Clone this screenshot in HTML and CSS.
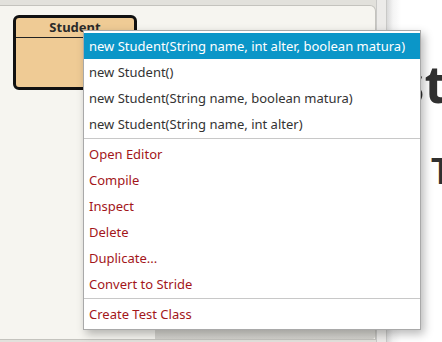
FILE: index.html
```html
<!DOCTYPE html>
<html>
<head>
<meta charset="utf-8">
<link rel="stylesheet" href="styles.css">
</head>
<body>
<div class="app">
  <div class="canvas-pane">
    <div class="canvas">
      <div class="other-class"></div>
      <div class="class-box">
        <div class="class-title">Student</div>
        <div class="class-body"></div>
      </div>
      <div class="hscroll"></div>
    </div>
  </div>
  <div class="divider"></div>
  <div class="doc">
    <div class="doc-h1">Test</div>
    <div class="doc-h2">T</div>
  </div>
</div>
<div class="menu">
  <div class="item active">new Student(String name, int alter, boolean matura)</div>
  <div class="item">new Student()</div>
  <div class="item">new Student(String name, boolean matura)</div>
  <div class="item">new Student(String name, int alter)</div>
  <div class="sep"></div>
  <div class="item red">Open Editor</div>
  <div class="item red">Compile</div>
  <div class="item red">Inspect</div>
  <div class="item red">Delete</div>
  <div class="item red">Duplicate...</div>
  <div class="item red">Convert to Stride</div>
  <div class="sep"></div>
  <div class="item red">Create Test Class</div>
</div>
</body>
</html>
```
FILE: styles.css
```css
html, body {
  margin: 0;
  padding: 0;
}
body {
  width: 442px;
  height: 342px;
  overflow: hidden;
  position: relative;
  font-family: "Noto Sans", "Open Sans", sans-serif;
  background: #ffffff;
}
.app {
  display: flex;
  height: 342px;
}
.canvas-pane {
  width: 376px;
  background: #e2e1dc;
  padding-top: 5px;
  box-sizing: border-box;
}
.canvas {
  position: relative;
  height: 335px;
  background: #f6f5f0;
  border: 1px solid #c4c3be;
  border-left: none;
  border-radius: 0 6px 0 0;
  box-sizing: border-box;
}
.other-class {
  position: absolute;
  left: -12px;
  top: 29px;
  width: 12px;
  height: 38px;
  box-sizing: border-box;
  border: 3px solid #4a4a4a;
  border-left: none;
  border-radius: 0 3px 3px 0;
  background: #efcb95;
}
.class-box {
  position: absolute;
  left: 13px;
  top: 9px;
  width: 124px;
  height: 75px;
  box-sizing: border-box;
  border: 3px solid #111;
  border-radius: 6px;
  background: #efcb95;
  display: flex;
  flex-direction: column;
}
.class-title {
  font-weight: bold;
  font-size: 13px;
  line-height: 16px;
  height: 20px;
  box-sizing: border-box;
  text-align: center;
  color: #2a2a2a;
  border-bottom: 1px solid #222;
  padding-top: 1px;
}
.class-body {
  flex: 1;
}
.hscroll {
  position: absolute;
  right: 0;
  bottom: 0;
  width: 220px;
  height: 11px;
  background: linear-gradient(#dcdbd6, #d2d1cc);
  border-radius: 0 0 3px 0;
}
.divider {
  width: 9px;
  background: #ecebe9;
  border-left: 1px solid #c9c9c7;
  border-right: 1px solid #c9c9c7;
}
.doc {
  flex: 1;
  background: linear-gradient(90deg, #d9d9d9 0px, #f4f4f4 6px, #ffffff 14px);
  overflow: hidden;
  white-space: nowrap;
  color: #303030;
}
.doc-h1 {
  font-weight: bold;
  font-size: 52px;
  line-height: 62px;
  margin-top: 52px;
  margin-left: -46px;
}
.doc-h2 {
  font-weight: 600;
  font-size: 36px;
  line-height: 44px;
  margin-top: 35px;
  margin-left: 44px;
}
.menu {
  position: absolute;
  left: 83px;
  top: 30px;
  width: 338px;
  box-sizing: border-box;
  background: #ffffff;
  border: 1px solid #a9a9a9;
  padding: 2px 0 2px;
  box-shadow: 3px 4px 9px rgba(0, 0, 0, 0.28);
}
.item {
  height: 26px;
  line-height: 26px;
  padding-left: 5px;
  font-size: 13px;
  color: #333333;
  white-space: nowrap;
}
.item.active {
  background: #0b96c8;
  color: #ffffff;
}
.item.red {
  color: #a3161a;
}
.sep {
  height: 1px;
  background: #c8c8c8;
  margin: 1px 0 2px;
}
```
